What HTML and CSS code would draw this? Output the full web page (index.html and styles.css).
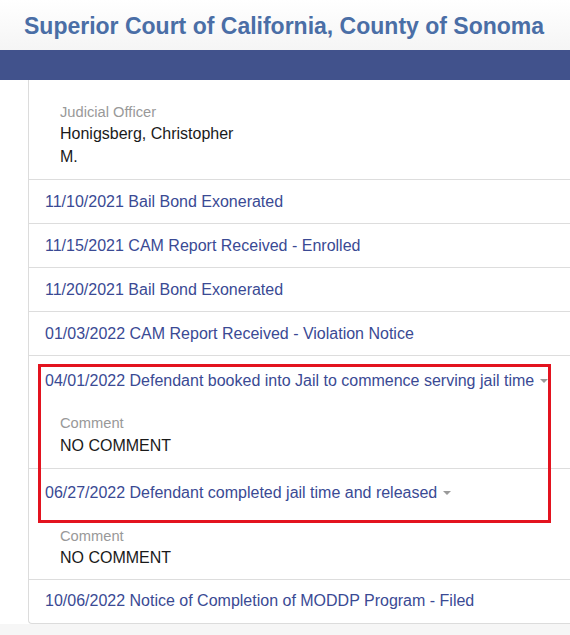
FILE: index.html
```html
<!DOCTYPE html>
<html>
<head>
<meta charset="utf-8">
<link rel="stylesheet" href="styles.css">
</head>
<body>
<header class="site-header">
  <h1 class="site-title">Superior Court of California, County of Sonoma</h1>
</header>
<nav class="nav-bar"></nav>
<main class="page">
  <div class="wrap">
    <section class="card">
      <div class="officer">
        <div class="label">Judicial Officer</div>
        <div class="value">Honigsberg, Christopher<br>M.</div>
      </div>
      <div class="row"><a class="event">11/10/2021 Bail Bond Exonerated</a></div>
      <div class="row"><a class="event">11/15/2021 CAM Report Received - Enrolled</a></div>
      <div class="row"><a class="event">11/20/2021 Bail Bond Exonerated</a></div>
      <div class="row"><a class="event">01/03/2022 CAM Report Received - Violation Notice</a></div>
      <div class="row expanded">
        <a class="event">04/01/2022 Defendant booked into Jail to commence serving jail time<span class="caret"></span></a>
        <div class="details">
          <div class="label">Comment</div>
          <div class="value">NO COMMENT</div>
        </div>
      </div>
      <div class="row expanded second">
        <a class="event">06/27/2022 Defendant completed jail time and released<span class="caret"></span></a>
        <div class="details">
          <div class="label">Comment</div>
          <div class="value">NO COMMENT</div>
        </div>
      </div>
      <div class="row last"><a class="event">10/06/2022 Notice of Completion of MODDP Program - Filed</a></div>
      <div class="highlight"></div>
    </section>
  </div>
  <div class="footer-space"></div>
</main>
</body>
</html>
```
FILE: styles.css
```css
* { box-sizing: border-box; }
html, body { margin: 0; padding: 0; }
body {
  font-family: "Liberation Sans", Arial, sans-serif;
  background: #f6f6f6;
  color: #222;
}
.site-header {
  height: 50px;
  background: linear-gradient(#ffffff, #f5f5f5);
  padding: 0 0 0 24px;
  display: flex;
  align-items: center;
}
.site-title {
  margin: 0;
  font-size: 23px;
  font-weight: bold;
  color: #4a6ea6;
  letter-spacing: 0;
  position: relative;
  top: 1px;
}
.nav-bar {
  height: 30px;
  background: #41528c;
}
.page { background: #fff; }
.wrap {
  padding-left: 28px;
  background: #fff;
}
.card {
  position: relative;
  background: #fff;
  border-left: 1px solid #dcdcdc;
  border-bottom: 1px solid #dcdcdc;
  border-bottom-left-radius: 4px;
}
.officer {
  padding: 22px 0 11px 31px;
  border-bottom: 1px solid #dddddd;
}
.label {
  font-size: 14.7px;
  line-height: 20px;
  color: #999;
}
.value {
  font-size: 16px;
  line-height: 23px;
  color: #1a1a1a;
}
.details .label { line-height: 21px; }
.row {
  padding: 11px 0 11px 16px;
  border-bottom: 1px solid #dddddd;
}
.row.last { border-bottom: none; padding-top: 10px; padding-bottom: 12px; }
.event {
  font-size: 16px;
  line-height: 21px;
  color: #3a4a94;
  display: inline-flex;
  align-items: center;
}
.expanded { padding-top: 14px; padding-bottom: 11px; }
.expanded.second { padding-top: 13px; padding-bottom: 10px; }
.details {
  padding: 22px 0 0 15px;
}
.expanded.second .details { padding-top: 23px; }
.expanded.second .details .value { line-height: 22px; }
.caret {
  display: inline-block;
  width: 0; height: 0;
  margin-left: 6px;
  border-left: 4.5px solid transparent;
  border-right: 4.5px solid transparent;
  border-top: 4.5px solid #9a9a9a;
}
.highlight {
  position: absolute;
  left: 9px;
  top: 284px;
  width: 513px;
  height: 159px;
  border: 3px solid #e3131f;
  pointer-events: none;
}
.footer-space {
  height: 11px;
  background: #f6f6f6;
}
```
